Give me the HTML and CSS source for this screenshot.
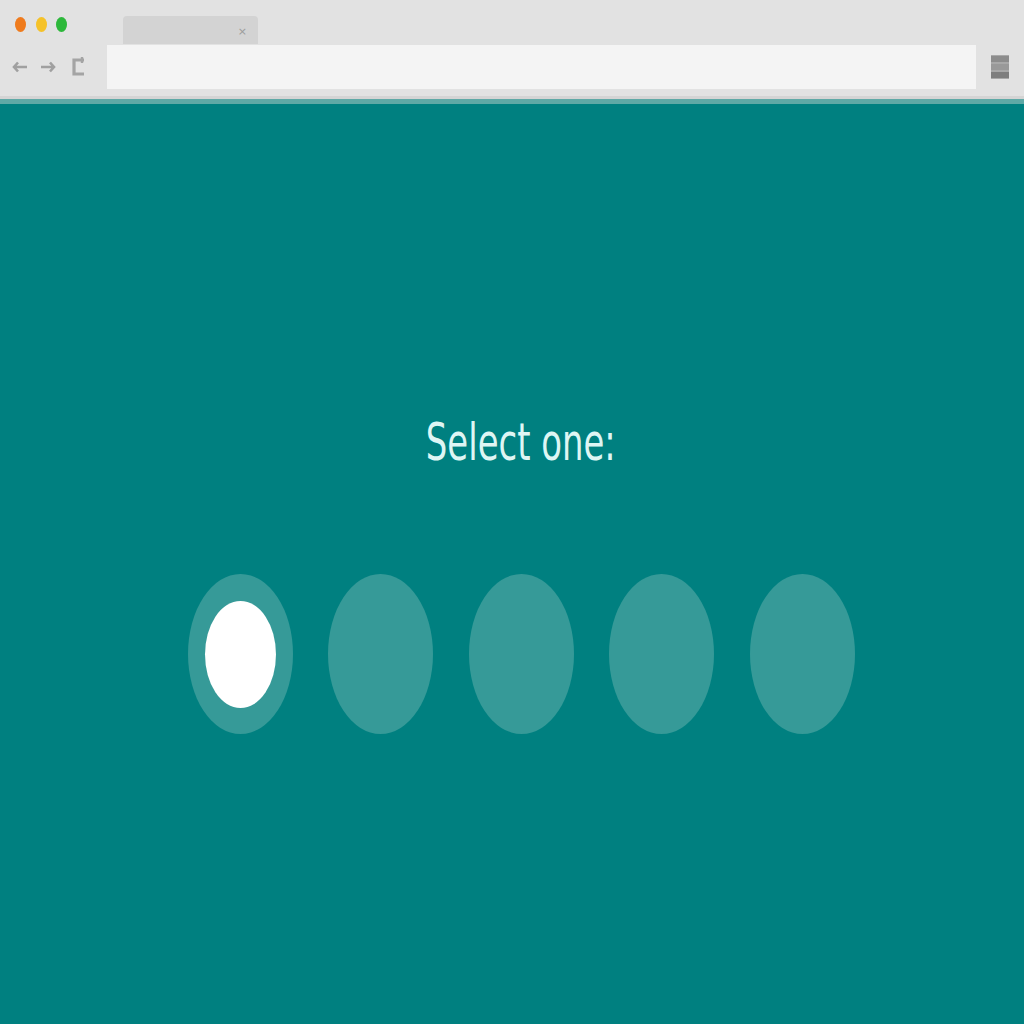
FILE: index.html
```html
<!DOCTYPE html>
<html lang="en">
<head>
<meta charset="utf-8">
<title>Select one</title>
<link rel="stylesheet" href="styles.css">
</head>
<body>
<div class="browser">
  <header class="chrome">
    <div class="tab-row">
      <div class="dots">
        <span class="dot dot-red"></span>
        <span class="dot dot-yellow"></span>
        <span class="dot dot-green"></span>
      </div>
      <div class="tab"><span class="tab-close">×</span></div>
    </div>
    <div class="nav-row">
      <div class="nav-icons">
        <svg class="nav-icon" width="16" height="16" viewBox="0 0 16 16"><path d="M15 8H2M6 3.5L2 8l4 4.5" fill="none" stroke="#a0a0a0" stroke-width="2.6"/></svg>
        <svg class="nav-icon" width="16" height="16" viewBox="0 0 16 16"><path d="M1 8h13M10 3.5L14 8l-4 4.5" fill="none" stroke="#a0a0a0" stroke-width="2.6"/></svg>
        <svg class="nav-icon reload" width="16" height="24" viewBox="0 0 16 24"><path d="M14 5H4v14h10" fill="none" stroke="#a4a4a4" stroke-width="3.2"/><path d="M12 2v6" stroke="#a4a4a4" stroke-width="2.4"/></svg>
      </div>
      <div class="address"></div>
      <div class="menu">
        <svg width="22" height="30" viewBox="0 0 22 30"><rect x="2" y="3" width="18" height="24" fill="#a8a8a8"/><rect x="2" y="4" width="18" height="6" fill="#8c8c8c"/><rect x="2" y="12" width="18" height="6" fill="#999"/><rect x="2" y="20" width="18" height="6" fill="#7e7e7e"/></svg>
      </div>
    </div>
  </header>
  <main class="stage">
    <h1 class="title">Select one:</h1>
    <div class="options">
      <div class="option selected"><span class="option-inner"></span></div>
      <div class="option"></div>
      <div class="option"></div>
      <div class="option"></div>
      <div class="option"></div>
    </div>
  </main>
</div>
</body>
</html>
```
FILE: styles.css
```css
html, body {
  margin: 0;
  padding: 0;
}
body {
  background: #008080;
  font-family: "DejaVu Sans", Verdana, sans-serif;
}
.browser {
  display: flex;
  flex-direction: column;
  min-height: 1024px;
}
.chrome {
  background: #e2e2e2;
  height: 96px;
  border-bottom: 3px solid #d4d4d4;
  display: flex;
  flex-direction: column;
}
.tab-row {
  height: 44px;
  display: flex;
  align-items: flex-end;
}
.dots {
  display: flex;
  gap: 9.5px;
  padding-left: 15px;
  align-self: flex-start;
  margin-top: 17px;
}
.dot {
  width: 11px;
  height: 15px;
  border-radius: 50%;
  display: block;
}
.dot-red { background: #ef7b1d; }
.dot-yellow { background: #f5c229; }
.dot-green { background: #2db83b; }
.tab {
  margin-left: 56px;
  width: 135px;
  height: 28px;
  background: #d3d3d3;
  border-radius: 4px 4px 0 0;
  display: flex;
  align-items: center;
  justify-content: flex-end;
}
.tab-close {
  font-size: 11px;
  color: #9c9c9c;
  margin-right: 11px;
  margin-top: 3px;
}
.nav-row {
  display: flex;
  align-items: flex-start;
  padding-top: 1px;
}
.nav-icons {
  width: 107px;
  height: 44px;
  display: flex;
  align-items: center;
  gap: 12px;
  padding-left: 12px;
  box-sizing: border-box;
}
.nav-icon {
  display: block;
}
.reload {
  margin-left: 2px;
}
.address {
  width: 869px;
  height: 44px;
  background: #f4f4f4;
}
.menu {
  flex: 1;
  height: 44px;
  display: flex;
  align-items: center;
  justify-content: center;
}
.stage {
  flex: 1;
  border-top: 5px solid #5fa9a6;
  display: flex;
  flex-direction: column;
  align-items: center;
  padding-top: 309px;
  padding-left: 18px;
}
.title {
  margin: 0;
  font-family: "DejaVu Sans", Verdana, sans-serif;
  font-weight: normal;
  font-size: 51px;
  line-height: 60px;
  color: #def6f4;
  transform: scaleX(0.665);
}
.options {
  margin-top: 101px;
  display: flex;
  gap: 35.5px;
}
.option {
  width: 105px;
  height: 160px;
  border-radius: 50%;
  background: #369a98;
  display: flex;
  align-items: center;
  justify-content: center;
}
.option-inner {
  width: 71px;
  height: 107px;
  border-radius: 50%;
  background: #ffffff;
  display: block;
}
```
